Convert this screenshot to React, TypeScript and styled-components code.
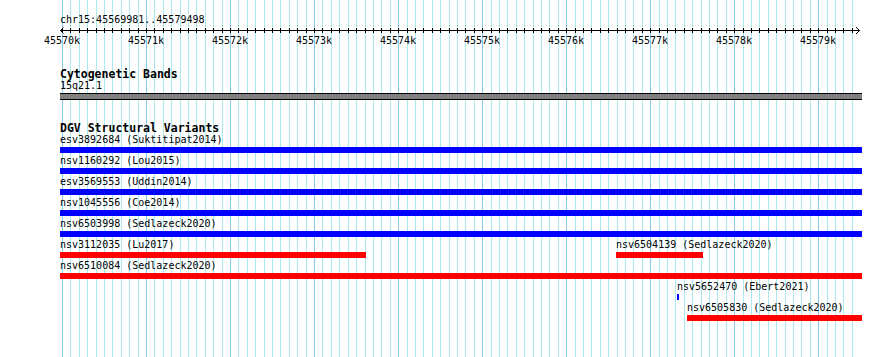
import styled, { createGlobalStyle } from 'styled-components';

// view: chr15:45569981..45579498
const ORIGIN_BP = 45570000;
const ORIGIN_PX = 2; // where 45570k sits, from the track's left edge
const PX_PER_BP = 0.08403;
const TRACK_WIDTH = 802;
const ROW_PITCH = 21;

const toPx = (bp: number) => ORIGIN_PX + (bp - ORIGIN_BP) * PX_PER_BP;
const clampPx = (px: number) => Math.max(0, Math.min(TRACK_WIDTH, px));

const GlobalStyle = createGlobalStyle`
  html, body {
    margin: 0;
    padding: 0;
    background: #fff;
  }
`;

const Page = styled.div`
  position: relative;
  width: 890px;
  height: 357px;
  overflow: hidden;
  background: #fff;
  color: #000;
  font-family: "DejaVu Sans Mono", "Liberation Mono", monospace;
`;

const GridLayer = styled.div`
  position: absolute;
  top: 0;
  bottom: 0;
  left: 60px;
  width: ${TRACK_WIDTH}px;
  pointer-events: none;
`;

const GridLine = styled.div<{ $major: boolean }>`
  position: absolute;
  top: 0;
  bottom: 0;
  width: 1px;
  background: ${(p) => (p.$major ? '#84cdf0' : '#ace8ef')};
`;

const Content = styled.div`
  position: relative;
  z-index: 1;
  display: flex;
  flex-direction: column;
  padding: 14px 0 0 60px;
  width: ${TRACK_WIDTH}px;
`;

const Ruler = styled.div`
  display: flex;
  flex-direction: column;
`;

const Location = styled.div`
  font-size: 10px;
  line-height: 12px;
  height: 12px;
`;

const Axis = styled.div`
  position: relative;
  height: 24px;
`;

const AxisLine = styled.div`
  position: absolute;
  top: 4px;
  left: 0;
  width: 800px;
  height: 1px;
  background: #000;
`;

const Tick = styled.div`
  position: absolute;
  top: 2px;
  width: 1px;
  height: 5px;
  background: #000;
`;

const TickLabel = styled.div`
  position: absolute;
  top: 9px;
  width: 42px;
  margin-left: -21px;
  text-align: center;
  font-size: 10px;
  line-height: 12px;
`;

const ArrowHead = styled.svg<{ $side: 'left' | 'right' }>`
  position: absolute;
  top: 1px;
  ${(p) => (p.$side === 'left' ? 'left: 0;' : 'right: 0;')}
  width: 6px;
  height: 8px;
  overflow: visible;
`;

const Track = styled.section<{ $gap: number }>`
  display: flex;
  flex-direction: column;
  margin-top: ${(p) => p.$gap}px;
`;

const TrackTitle = styled.div`
  font-size: 11.5px;
  font-weight: bold;
  line-height: 12px;
  height: 12px;
  white-space: nowrap;
`;

const SmallLabel = styled.div`
  font-size: 10px;
  line-height: 12px;
  height: 12px;
  white-space: nowrap;
`;

const BandBar = styled.div`
  margin-top: 1px;
  width: ${TRACK_WIDTH}px;
  height: 7px;
  box-sizing: border-box;
  border-top: 1px solid #000;
  border-bottom: 1px solid #000;
  background: #808080;
`;

const FeatureLane = styled.div<{ $rows: number }>`
  position: relative;
  height: ${(p) => p.$rows * ROW_PITCH}px;
`;

const Feature = styled.div`
  position: absolute;
  display: flex;
  flex-direction: column;
  gap: 1px;
`;

const FeatureBar = styled.div<{ $kind: 'gain' | 'loss' }>`
  height: 6px;
  background: ${(p) => (p.$kind === 'loss' ? '#ff0000' : '#0000ff')};
`;

type Variant = {
  id: string;
  study: string;
  start: number;
  end: number;
  row: number;
  kind: 'gain' | 'loss';
};

const variants: Variant[] = [
  { id: 'esv3892684', study: 'Suktitipat2014', start: 45560000, end: 45590000, row: 0, kind: 'gain' },
  { id: 'nsv1160292', study: 'Lou2015', start: 45560000, end: 45590000, row: 1, kind: 'gain' },
  { id: 'esv3569553', study: 'Uddin2014', start: 45560000, end: 45590000, row: 2, kind: 'gain' },
  { id: 'nsv1045556', study: 'Coe2014', start: 45560000, end: 45590000, row: 3, kind: 'gain' },
  { id: 'nsv6503998', study: 'Sedlazeck2020', start: 45560000, end: 45590000, row: 4, kind: 'gain' },
  { id: 'nsv3112035', study: 'Lu2017', start: 45560000, end: 45573618, row: 5, kind: 'loss' },
  { id: 'nsv6504139', study: 'Sedlazeck2020', start: 45576593, end: 45577628, row: 5, kind: 'loss' },
  { id: 'nsv6510084', study: 'Sedlazeck2020', start: 45560000, end: 45590000, row: 6, kind: 'loss' },
  { id: 'nsv5652470', study: 'Ebert2021', start: 45577319, end: 45577343, row: 7, kind: 'gain' },
  { id: 'nsv6505830', study: 'Sedlazeck2020', start: 45577438, end: 45590000, row: 8, kind: 'loss' },
];

const gridStops: { bp: number; x: number; major: boolean }[] = [];
for (let bp = ORIGIN_BP; bp <= 45579400; bp += 100) {
  gridStops.push({ bp, x: Math.round(toPx(bp)), major: bp % 1000 === 0 });
}

const App = () => {
  const rows = Math.max(...variants.map((v) => v.row)) + 1;

  return (
    <Page>
      <GlobalStyle />
      <GridLayer>
        {gridStops.map((g) => (
          <GridLine key={g.bp} $major={g.major} style={{ left: g.x }} />
        ))}
      </GridLayer>

      <Content>
        <Ruler>
          <Location>chr15:45569981..45579498</Location>
          <Axis>
            <AxisLine />
            <ArrowHead $side="left" viewBox="0 0 6 8">
              <polyline points="3.5,0.5 0.5,3.5 3.5,6.5" fill="none" stroke="#000" strokeWidth="1" />
            </ArrowHead>
            <ArrowHead $side="right" viewBox="0 0 6 8" style={{ right: TRACK_WIDTH - 802 + 2 }}>
              <polyline points="2,0 5.5,3.5 2,7" fill="none" stroke="#000" strokeWidth="1" />
            </ArrowHead>
            {gridStops.map((g) => (
              <Tick key={g.bp} style={{ left: g.x }} />
            ))}
            {gridStops
              .filter((g) => g.major)
              .map((g) => (
                <TickLabel key={g.bp} style={{ left: g.x }}>
                  {g.bp / 1000}k
                </TickLabel>
              ))}
          </Axis>
        </Ruler>

        <Track $gap={18}>
          <TrackTitle>Cytogenetic Bands</TrackTitle>
          <SmallLabel>15q21.1</SmallLabel>
          <BandBar />
        </Track>

        <Track $gap={22}>
          <TrackTitle>DGV Structural Variants</TrackTitle>
          <FeatureLane $rows={rows}>
            {variants.map((v) => {
              const left = clampPx(toPx(v.start));
              const right = clampPx(toPx(v.end));
              return (
                <Feature key={v.id} style={{ top: v.row * ROW_PITCH, left: Math.round(left) }}>
                  <SmallLabel>
                    {v.id} ({v.study})
                  </SmallLabel>
                  <FeatureBar $kind={v.kind} style={{ width: Math.max(2, Math.round(right - left)) }} />
                </Feature>
              );
            })}
          </FeatureLane>
        </Track>
      </Content>
    </Page>
  );
};

export default App;
